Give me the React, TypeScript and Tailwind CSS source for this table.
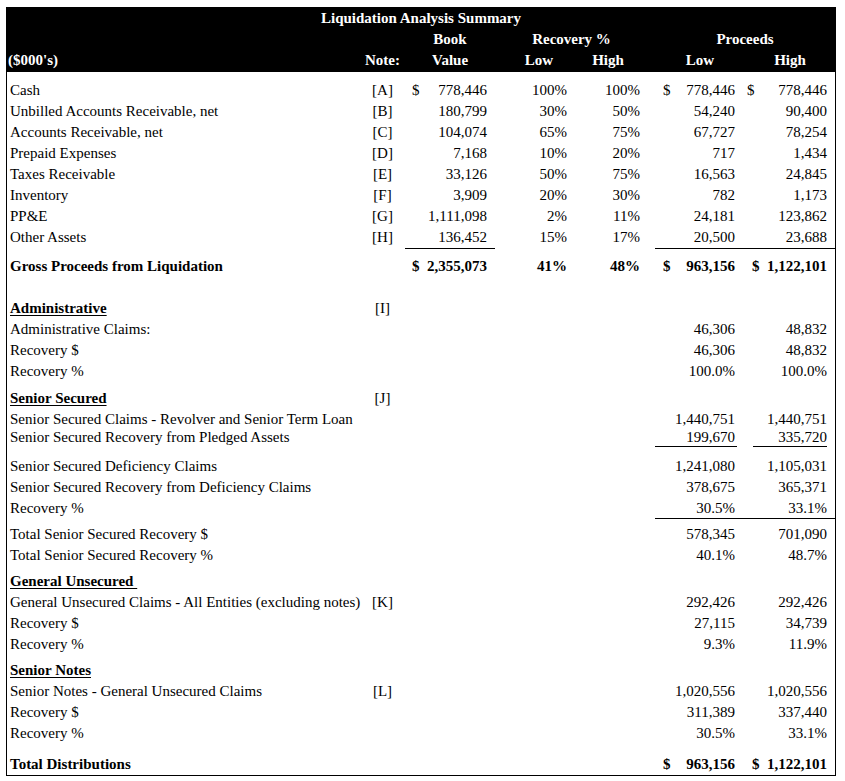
import React from 'react';

const cols = 'grid grid-cols-[353px_45px_90px_80px_73px_97px_90px]';

type LineProps = {
  label: string;
  note?: string;
  book?: string;
  low?: string;
  high?: string;
  pLow?: string;
  pHigh?: string;
  dollar?: boolean;
  bold?: boolean;
  heading?: boolean;
  ul?: 'span' | 'pair';
  cls?: string;
};

function Line({ label, note, book, low, high, pLow, pHigh, dollar, bold, heading, ul, cls = 'h-[21px] leading-[21px]' }: LineProps) {
  const bookCls = book && ul === 'span' ? 'border-b border-black pl-[7px] pr-[8px]' : 'pl-[7px] pr-[8px]';
  const lowCls =
    ul === 'span'
      ? 'ml-[7px] border-b border-black pl-[8px] pr-[10px]'
      : ul === 'pair'
        ? 'ml-[7px] mr-[8px] border-b border-black pl-[8px] pr-[2px]'
        : 'pl-[15px] pr-[10px]';
  const highCls =
    ul === 'span'
      ? 'border-b border-black pl-[2px] pr-[8px]'
      : ul === 'pair'
        ? 'ml-[8px] mr-[8px] border-b border-black'
        : bold
          ? 'pl-[7px] pr-[8px]'
          : 'pl-[2px] pr-[8px]';

  return (
    <div className={`${cols} ${cls} ${bold ? 'font-bold' : ''}`}>
      <div className="pl-[3px] whitespace-nowrap">
        {heading ? <span className="underline decoration-1 underline-offset-[2px]">{label}</span> : label}
      </div>
      <div className="text-center font-normal">{note}</div>
      <div className={`flex justify-between ${bookCls}`}>
        <span>{book && dollar ? '$' : ''}</span>
        <span>{book}</span>
      </div>
      <div className="text-right pr-[8px]">{low}</div>
      <div className="text-right pr-[8px]">{high}</div>
      <div className={`flex justify-between ${lowCls}`}>
        <span>{pLow && dollar ? '$' : ''}</span>
        <span>{pLow}</span>
      </div>
      <div className={`flex justify-between ${highCls}`}>
        <span>{pHigh && dollar ? '$' : ''}</span>
        <span>{pHigh}</span>
      </div>
    </div>
  );
}

const assets = [
  { label: 'Cash', note: '[A]', book: '778,446', low: '100%', high: '100%', pLow: '778,446', pHigh: '778,446', dollar: true },
  { label: 'Unbilled Accounts Receivable, net', note: '[B]', book: '180,799', low: '30%', high: '50%', pLow: '54,240', pHigh: '90,400' },
  { label: 'Accounts Receivable, net', note: '[C]', book: '104,074', low: '65%', high: '75%', pLow: '67,727', pHigh: '78,254' },
  { label: 'Prepaid Expenses', note: '[D]', book: '7,168', low: '10%', high: '20%', pLow: '717', pHigh: '1,434' },
  { label: 'Taxes Receivable', note: '[E]', book: '33,126', low: '50%', high: '75%', pLow: '16,563', pHigh: '24,845' },
  { label: 'Inventory', note: '[F]', book: '3,909', low: '20%', high: '30%', pLow: '782', pHigh: '1,173' },
  { label: 'PP&E', note: '[G]', book: '1,111,098', low: '2%', high: '11%', pLow: '24,181', pHigh: '123,862' },
];

export default function App() {
  return (
    <div className="w-[845px] h-[781px] bg-white pt-[7px] pl-[6px] font-['Liberation_Serif',serif] text-[15px] text-black">
      <div className="w-[830px] border border-black">
        <div className="bg-black text-white font-bold h-[64px] leading-[21px]">
          <div className="h-[21px] text-center">Liquidation Analysis Summary</div>
          <div className={`${cols} h-[21px]`}>
            <div />
            <div />
            <div className="text-center">Book</div>
            <div className="col-span-2 text-center">Recovery %</div>
            <div className="col-span-2 text-center pl-[7px]">Proceeds</div>
          </div>
          <div className={`${cols} h-[21px]`}>
            <div className="pl-[1px]">($000's)</div>
            <div className="text-center">Note:</div>
            <div className="text-center">Value</div>
            <div className="text-center pl-[8px]">Low</div>
            <div className="text-center pr-[7px]">High</div>
            <div className="text-center pl-[7px]">Low</div>
            <div className="text-center">High</div>
          </div>
        </div>

        <div className="pt-[8px]">
          {assets.map((a) => (
            <Line key={a.label} {...a} />
          ))}
          <Line label="Other Assets" note="[H]" book="136,452" low="15%" high="17%" pLow="20,500" pHigh="23,688" ul="span" />
          <Line
            label="Gross Proceeds from Liquidation"
            book="2,355,073"
            low="41%"
            high="48%"
            pLow="963,156"
            pHigh="1,122,101"
            dollar
            bold
            cls="h-[21px] leading-[21px] mt-[8px]"
          />

          <Line label="Administrative" note="[I]" bold heading cls="h-[21px] leading-[21px] mt-[21px]" />
          <Line label="Administrative Claims:" pLow="46,306" pHigh="48,832" />
          <Line label="Recovery $" pLow="46,306" pHigh="48,832" />
          <Line label="Recovery %" pLow="100.0%" pHigh="100.0%" />

          <Line label="Senior Secured" note="[J]" bold heading cls="h-[21px] leading-[21px] mt-[6px]" />
          <Line label="Senior Secured Claims - Revolver and Senior Term Loan" pLow="1,440,751" pHigh="1,440,751" cls="h-[20px] leading-[20px]" />
          <Line label="Senior Secured Recovery from Pledged Assets" pLow="199,670" pHigh="335,720" ul="pair" cls="h-[18px] leading-[17px]" />
          <Line label="Senior Secured Deficiency Claims" pLow="1,241,080" pHigh="1,105,031" cls="h-[21px] leading-[21px] mt-[9px]" />
          <Line label="Senior Secured Recovery from Deficiency Claims" pLow="378,675" pHigh="365,371" />
          <Line label="Recovery %" pLow="30.5%" pHigh="33.1%" ul="span" cls="h-[21px] leading-[20px]" />
          <Line label="Total Senior Secured Recovery $" pLow="578,345" pHigh="701,090" cls="h-[21px] leading-[21px] mt-[5px]" />
          <Line label="Total Senior Secured Recovery %" pLow="40.1%" pHigh="48.7%" />

          <Line label={'General Unsecured\u00a0'} bold heading cls="h-[21px] leading-[21px] mt-[5px]" />
          <Line label="General Unsecured Claims - All Entities (excluding notes)" note="[K]" pLow="292,426" pHigh="292,426" />
          <Line label="Recovery $" pLow="27,115" pHigh="34,739" />
          <Line label="Recovery %" pLow="9.3%" pHigh="11.9%" />

          <Line label="Senior Notes" bold heading cls="h-[21px] leading-[21px] mt-[5px]" />
          <Line label="Senior Notes - General Unsecured Claims" note="[L]" pLow="1,020,556" pHigh="1,020,556" />
          <Line label="Recovery $" pLow="311,389" pHigh="337,440" />
          <Line label="Recovery %" pLow="30.5%" pHigh="33.1%" />

          <Line
            label="Total Distributions"
            pLow="963,156"
            pHigh="1,122,101"
            dollar
            bold
            cls="h-[21px] leading-[21px] mt-[10px]"
          />
        </div>
      </div>
    </div>
  );
}
